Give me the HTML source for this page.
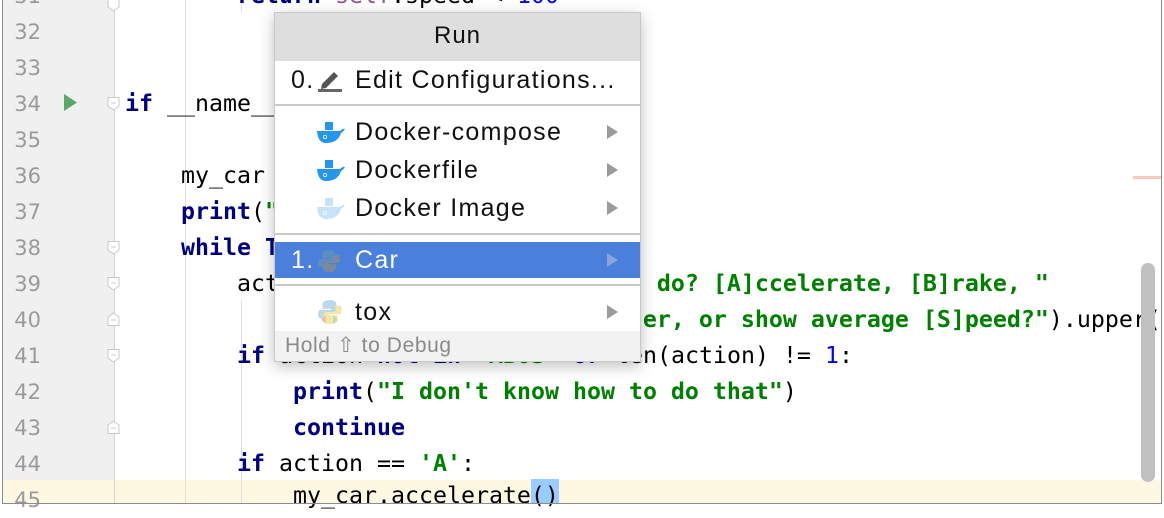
<!DOCTYPE html>
<html><head><meta charset="utf-8"><style>
html,body{margin:0;padding:0;}
body{width:1164px;height:506px;overflow:hidden;background:#fff;position:relative;font-family:"Liberation Sans",sans-serif;}
.frame{position:absolute;left:2px;top:0;width:1160px;height:504px;border-left:1px solid #8c8c8c;border-right:1px solid #8c8c8c;border-bottom:1px solid #8c8c8c;box-sizing:border-box;}
.gutter{position:absolute;left:3px;top:0;width:111px;height:504px;background:#f0f0f0;}
.gline{position:absolute;left:114px;top:0;width:1px;height:504px;background:#d6d6d6;}
.cur{position:absolute;left:3px;top:480px;width:1158px;height:24px;background:#fef8e3;}
.ln{position:absolute;left:0;width:41px;text-align:right;font-family:"DejaVu Sans",sans-serif;font-size:21px;color:#9a9a9a;line-height:36px;}
.code{position:absolute;left:125px;font-family:"DejaVu Sans Mono",monospace;font-size:23.25px;line-height:36px;white-space:pre;color:#000;}
.k{color:#000080;font-weight:bold}
.s{color:#008000;font-weight:bold}
.n{color:#0000ff}
.self{color:#94558d}
.guide{position:absolute;width:1px;background:#e0e0e0;}
.fold{position:absolute;left:107px;width:13px;height:14px;}
.popup{position:absolute;left:274px;top:12px;width:367px;height:350px;background:#fff;border:1px solid #c8c8c8;box-sizing:border-box;box-shadow:0 4px 14px rgba(0,0,0,0.25);}
.hdr{height:48px;background:#dedede;text-align:center;font-size:24px;letter-spacing:1px;line-height:46px;color:#111;}
.it{position:absolute;left:0;width:365px;height:36px;font-size:25px;letter-spacing:1.3px;line-height:36px;color:#111;}
.it .t{position:absolute;left:80px;}
.arr{position:absolute;left:332px;top:11px;width:0;height:0;border-left:11px solid #9b9b9b;border-top:7px solid transparent;border-bottom:7px solid transparent;}
.sep{position:absolute;left:0;width:365px;height:2px;background:#c9c9c9;}
.foot{position:absolute;left:0;top:318px;width:365px;height:30px;background:#f2f2f2;font-size:21px;letter-spacing:0.6px;line-height:30px;color:#8a8a8a;padding-left:10px;box-sizing:border-box;}
</style></head><body>
<div class="gutter"></div>
<div class="cur"></div>
<div class="gline"></div>
<div class="guide" style="left:185px;top:0;height:504px"></div>
<div class="guide" style="left:241px;top:300px;height:204px"></div>
<div class="guide" style="left:241px;top:0;height:12px"></div>

<div class="ln" style="top:-22px">31</div>
<div class="ln" style="top:14px">32</div>
<div class="ln" style="top:50px">33</div>
<div class="ln" style="top:86px">34</div>
<div class="ln" style="top:122px">35</div>
<div class="ln" style="top:158px">36</div>
<div class="ln" style="top:194px">37</div>
<div class="ln" style="top:230px">38</div>
<div class="ln" style="top:266px">39</div>
<div class="ln" style="top:302px">40</div>
<div class="ln" style="top:338px">41</div>
<div class="ln" style="top:374px">42</div>
<div class="ln" style="top:410px">43</div>
<div class="ln" style="top:446px">44</div>
<div class="ln" style="top:482px">45</div>

<svg style="position:absolute;left:64px;top:94px" width="14" height="18"><polygon points="0,0 13,8.5 0,17" fill="#59a869"/></svg>

<svg class="fold" style="top:-2px" viewBox="0 0 13 14"><path d="M1,0.5 H12 V9 L6.5,13 L1,9 Z" fill="#fff" stroke="#c8c8c8"/></svg>
<svg class="fold" style="top:97px" viewBox="0 0 13 14"><path d="M1,0.5 H12 V9 L6.5,13 L1,9 Z" fill="#fff" stroke="#c8c8c8"/><path d="M4,6 H9" stroke="#c8c8c8"/></svg>
<svg class="fold" style="top:241px" viewBox="0 0 13 14"><path d="M1,0.5 H12 V9 L6.5,13 L1,9 Z" fill="#fff" stroke="#c8c8c8"/><path d="M4,6 H9" stroke="#c8c8c8"/></svg>
<svg class="fold" style="top:277px" viewBox="0 0 13 14"><path d="M1,0.5 H12 V9 L6.5,13 L1,9 Z" fill="#fff" stroke="#c8c8c8"/><path d="M4,6 H9" stroke="#c8c8c8"/></svg>
<svg class="fold" style="top:312px" viewBox="0 0 13 14"><path d="M1,13.5 H12 V5 L6.5,1 L1,5 Z" fill="#fff" stroke="#c8c8c8"/><path d="M4,8 H9" stroke="#c8c8c8"/></svg>
<svg class="fold" style="top:349px" viewBox="0 0 13 14"><path d="M1,0.5 H12 V9 L6.5,13 L1,9 Z" fill="#fff" stroke="#c8c8c8"/><path d="M4,6 H9" stroke="#c8c8c8"/></svg>
<svg class="fold" style="top:420px" viewBox="0 0 13 14"><path d="M1,13.5 H12 V5 L6.5,1 L1,5 Z" fill="#fff" stroke="#c8c8c8"/><path d="M4,8 H9" stroke="#c8c8c8"/></svg>

<div class="code" style="top:-22px">        <span class="k">return</span> <span class="self">self</span>.speed &lt; <span class="n">100</span></div>
<div class="code" style="top:86px"><span class="k">if</span> __name__ == <span class="s">'__main__'</span>:</div>
<div class="code" style="top:158px">    my_car = Car()</div>
<div class="code" style="top:194px">    <span class="k">print</span>(<span class="s">"I'm a car!"</span>)</div>
<div class="code" style="top:230px">    <span class="k">while</span> <span class="k">True</span>:</div>
<div class="code" style="top:266px">        action = input(<span class="s">"What should I do? [A]ccelerate, [B]rake, "</span></div>
<div class="code" style="top:302px">                            <span class="s">"[O]dometer, or show average [S]peed?"</span>).upper()</div>
<div class="code" style="top:338px">        <span class="k">if</span> action <span class="k">not in</span> <span class="s">"ABOS"</span> <span class="k">or</span> len(action) != <span class="n">1</span>:</div>
<div class="code" style="top:374px">            <span class="k">print</span>(<span class="s">"I don't know how to do that"</span>)</div>
<div class="code" style="top:410px">            <span class="k">continue</span></div>
<div class="code" style="top:446px">        <span class="k">if</span> action == <span class="s">'A'</span>:</div>
<div style="position:absolute;left:531px;top:479px;width:28px;height:25px;background:#99ccff;"></div>
<div class="code" style="top:478px">            my_car.accelerate()</div>

<div style="position:absolute;left:1133px;top:176px;width:28px;height:3px;background:#f6c8c0"></div>
<div style="position:absolute;left:1141px;top:263px;width:14px;height:219px;border-radius:7px;background:#c0c0c0"></div>
<div class="frame"></div>

<div class="popup">
  <div class="hdr">Run</div>
  <div class="it" style="top:49px"><span style="position:absolute;left:16px">0.</span>
    <svg style="position:absolute;left:42px;top:6px" width="26" height="24" viewBox="0 0 26 24"><path d="M5,16 L17,4 L21,8 L9,20 L4,21 Z" fill="#555"/><rect x="1" y="21" width="24" height="3" fill="#666"/></svg>
    <span class="t">Edit Configurations...</span></div>
  <div class="sep" style="top:91px"></div>
  <div class="it" style="top:101px"><svg style="position:absolute;left:41px;top:8px" width="30" height="22" viewBox="0 0 30 22"><rect x="9" y="0" width="8" height="8" fill="#2496ed"/><path d="M1,9 H24 Q27,6 29,7 Q27,10 25,11 Q22,21 10,21 Q2,21 1,9Z" fill="#2496ed"/><circle cx="9" cy="15" r="1.6" fill="none" stroke="#fff" stroke-width="0.8"/></svg><span class="t">Docker-compose</span><div class="arr"></div></div>
  <div class="it" style="top:139px"><svg style="position:absolute;left:41px;top:8px" width="30" height="22" viewBox="0 0 30 22"><rect x="9" y="0" width="8" height="8" fill="#2496ed"/><path d="M1,9 H24 Q27,6 29,7 Q27,10 25,11 Q22,21 10,21 Q2,21 1,9Z" fill="#2496ed"/><circle cx="9" cy="15" r="1.6" fill="none" stroke="#fff" stroke-width="0.8"/></svg><span class="t">Dockerfile</span><div class="arr"></div></div>
  <div class="it" style="top:177px"><svg style="position:absolute;left:41px;top:8px" width="30" height="22" viewBox="0 0 30 22"><rect x="9" y="0" width="8" height="8" fill="#c6e3f9"/><path d="M1,9 H24 Q27,6 29,7 Q27,10 25,11 Q22,21 10,21 Q2,21 1,9Z" fill="#c6e3f9"/><circle cx="9" cy="15" r="1.6" fill="none" stroke="#fff" stroke-width="0.8"/></svg><span class="t">Docker Image</span><div class="arr"></div></div>
  <div class="sep" style="top:220px"></div>
  <div class="it" style="top:229px;background:#4a7fdc;color:#fff"><span style="position:absolute;left:16px">1.</span>
    <svg style="position:absolute;left:42px;top:7px" width="24" height="24" viewBox="0 0 24 24"><path d="M12,1 Q5,1 5,5 V9 H13 V10 H3 Q1,10 1,15 Q1,18 4,18 H7 V14 Q7,12 10,12 H15 Q18,12 18,9 V5 Q18,1 12,1Z" fill="#5a8fc4"/><path d="M12,23 Q19,23 19,19 V15 H11 V14 H21 Q23,14 23,9 Q23,6 20,6 H17 V10 Q17,12 14,12 H9 Q6,12 6,15 V19 Q6,23 12,23Z" fill="#7a8a9a"/></svg>
    <span class="t">Car</span><div class="arr" style="border-left-color:#8aa6d8"></div></div>
  <div class="sep" style="top:271px"></div>
  <div class="it" style="top:281px"><svg style="position:absolute;left:42px;top:5px" width="26" height="26" viewBox="0 0 24 24"><path d="M12,1 Q5,1 5,5 V9 H13 V10 H3 Q1,10 1,15 Q1,18 4,18 H7 V14 Q7,12 10,12 H15 Q18,12 18,9 V5 Q18,1 12,1Z" fill="#bcd8ec"/><path d="M12,23 Q19,23 19,19 V15 H11 V14 H21 Q23,14 23,9 Q23,6 20,6 H17 V10 Q17,12 14,12 H9 Q6,12 6,15 V19 Q6,23 12,23Z" fill="#f6e6a8"/><path d="M8,15 L4,19 L8,23Z" fill="#f2b8a8"/><path d="M15,15 L19,19 L15,23Z" fill="#b6dcb0"/></svg><span class="t">tox</span><div class="arr"></div></div>
  <div class="foot">Hold ⇧ to Debug</div>
</div>
</body></html>
